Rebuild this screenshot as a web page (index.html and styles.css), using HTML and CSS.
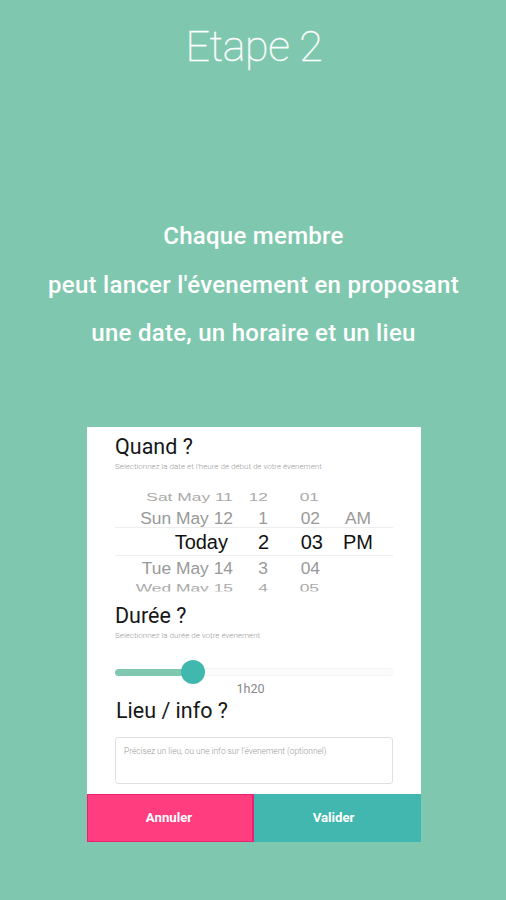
FILE: index.html
```html
<!DOCTYPE html>
<html lang="fr">
  <head>
    <meta charset="utf-8">
    <meta name="viewport" content="width=device-width, initial-scale=1">
    <title>Etape 2</title>
    <link rel="stylesheet" href="styles.css">
  </head>
  <body>
    <h1>Etape 2</h1>
    <p class="intro">Chaque membre<br>
      peut lancer l'évenement en proposant<br>
      une date, un horaire et un lieu</p>

    <form class="card">
      <div class="content">
        <h2 class="when">Quand ?</h2>
        <p class="hint">Selectionnez la date et l'heure de début de votre évenement</p>

        <div class="picker">
          <div class="row far top"><span class="day">Sat May 11</span><span class="hour">12</span><span class="min">01</span><span class="ampm"></span></div>
          <div class="row near"><span class="day">Sun May 12</span><span class="hour">1</span><span class="min">02</span><span class="ampm">AM</span></div>
          <div class="row current"><span class="day">Today</span><span class="hour">2</span><span class="min">03</span><span class="ampm">PM</span></div>
          <div class="row near below"><span class="day">Tue May 14</span><span class="hour">3</span><span class="min">04</span><span class="ampm"></span></div>
          <div class="row far bottom"><span class="day">Wed May 15</span><span class="hour">4</span><span class="min">05</span><span class="ampm"></span></div>
        </div>

        <h2 class="duration">Durée ?</h2>
        <p class="hint">Selectionnez la durée de votre évenement</p>
        <div class="slider">
          <div class="fill"></div>
          <div class="knob"></div>
          <div class="track"></div>
        </div>
        <div class="value">1h20</div>

        <h2 class="place">Lieu / info ?</h2>
        <div class="field">Précisez un lieu, ou une info sur l'évenement (optionnel)</div>
      </div>
      <div class="actions">
        <button type="button" class="cancel">Annuler</button>
        <button type="button" class="ok">Valider</button>
      </div>
    </form>
  </body>
</html>
```
FILE: styles.css
```css
* { box-sizing: border-box; }

body {
  margin: 0;
  height: 900px;
  overflow: hidden;
  background: #7fc8af;
  font-family: Roboto, sans-serif;
  color: #fff;
}

h1 {
  margin: 19px 0 0;
  padding-left: 2px;
  height: 55px;
  line-height: 54px;
  font-size: 43px;
  font-weight: 100;
  letter-spacing: -.4px;
  text-align: center;
  -webkit-text-stroke: .4px #fff;
}

.intro {
  margin: 138px 0 0;
  height: 146px;
  padding-left: 1px;
  font-size: 24px;
  font-weight: 500;
  letter-spacing: .27px;
  line-height: 48.6px;
  text-align: center;
  white-space: nowrap;
}

/* white card */
.card {
  display: flex;
  flex-direction: column;
  width: 334px;
  height: 415px;
  margin: 69px 0 0 87px;
  background: #fff;
}

.content {
  height: 367px;
  padding: 6px 28px 0;
}

h2 {
  margin: 0;
  height: 28px;
  line-height: 28px;
  font-size: 21.5px;
  font-weight: 400;
  color: #171717;
}

.hint {
  margin: 0;
  height: 12px;
  line-height: 12px;
  font-size: 8px;
  font-weight: 300;
  color: #999;
  white-space: nowrap;
}

/* date picker */
.picker {
  height: 110px;
  margin-top: 14px;
  font-family: "Liberation Sans", Arial, sans-serif;
}

.row {
  display: grid;
  grid-template-columns: 118px 35px 53px 50px;
  align-items: center;
  height: 21px;
  font-size: 17.4px;
  color: #999;
  text-align: right;
  white-space: nowrap;
}

.near { padding-top: 2px; }
.near .min { padding-right: 1px; }

.far {
  height: 18px;
  color: #aaa;
  transform: scaleY(.65);
}

.far .min { padding-right: 2px; }

.top { height: 19px; }
.below { height: 23px; }

.bottom {
  height: 15px;
  overflow: hidden;
}

.current {
  grid-template-columns: 118px 36px 54px 50px;
  height: 29px;
  padding-top: 2px;
  font-size: 20px;
  color: #111;
  border-top: 1px solid #eee;
  border-bottom: 1px solid #eee;
}

.current .day { padding-right: 5px; }

.duration { margin-top: 5px; }

/* duration slider */
.slider {
  display: flex;
  align-items: center;
  height: 24px;
  margin-top: 18px;
}

.fill {
  width: 68px;
  height: 7px;
  border-radius: 4px 0 0 4px;
  background: #7fc8af;
}

.knob {
  width: 24px;
  height: 24px;
  margin-left: -2px;
  border-radius: 50%;
  background: #41b8ae;
}

.track {
  flex: 1;
  height: 8px;
  border: 1px solid #f5f5f5;
  border-left: 0;
  border-radius: 0 4px 4px 0;
  background: #fcfcfc;
}

.value {
  height: 13px;
  padding-right: 7px;
  line-height: 10px;
  font-size: 12.5px;
  text-align: center;
  color: #888;
}

.place { padding-left: 1px; }

.field {
  height: 47px;
  margin-top: 12px;
  padding: 7px 8px;
  border: 1px solid #e0e0e0;
  border-radius: 3px;
  line-height: 12px;
  font-size: 8.4px;
  font-weight: 300;
  color: #999;
  white-space: nowrap;
}

.actions {
  display: flex;
  height: 48px;
}

.actions button {
  width: 167px;
  padding: 0 3px 2px 0;
  border: 0;
  font-family: Roboto, sans-serif;
  font-size: 13.2px;
  font-weight: 700;
  color: #fff;
}

.actions .cancel {
  padding-right: 2px;
  background: #ff3d7f;
  border: 1px solid #ed2074;
  border-right-width: 2px;
}

.actions .ok {
  padding-right: 8px;
  background: #41b7af;
}
```
